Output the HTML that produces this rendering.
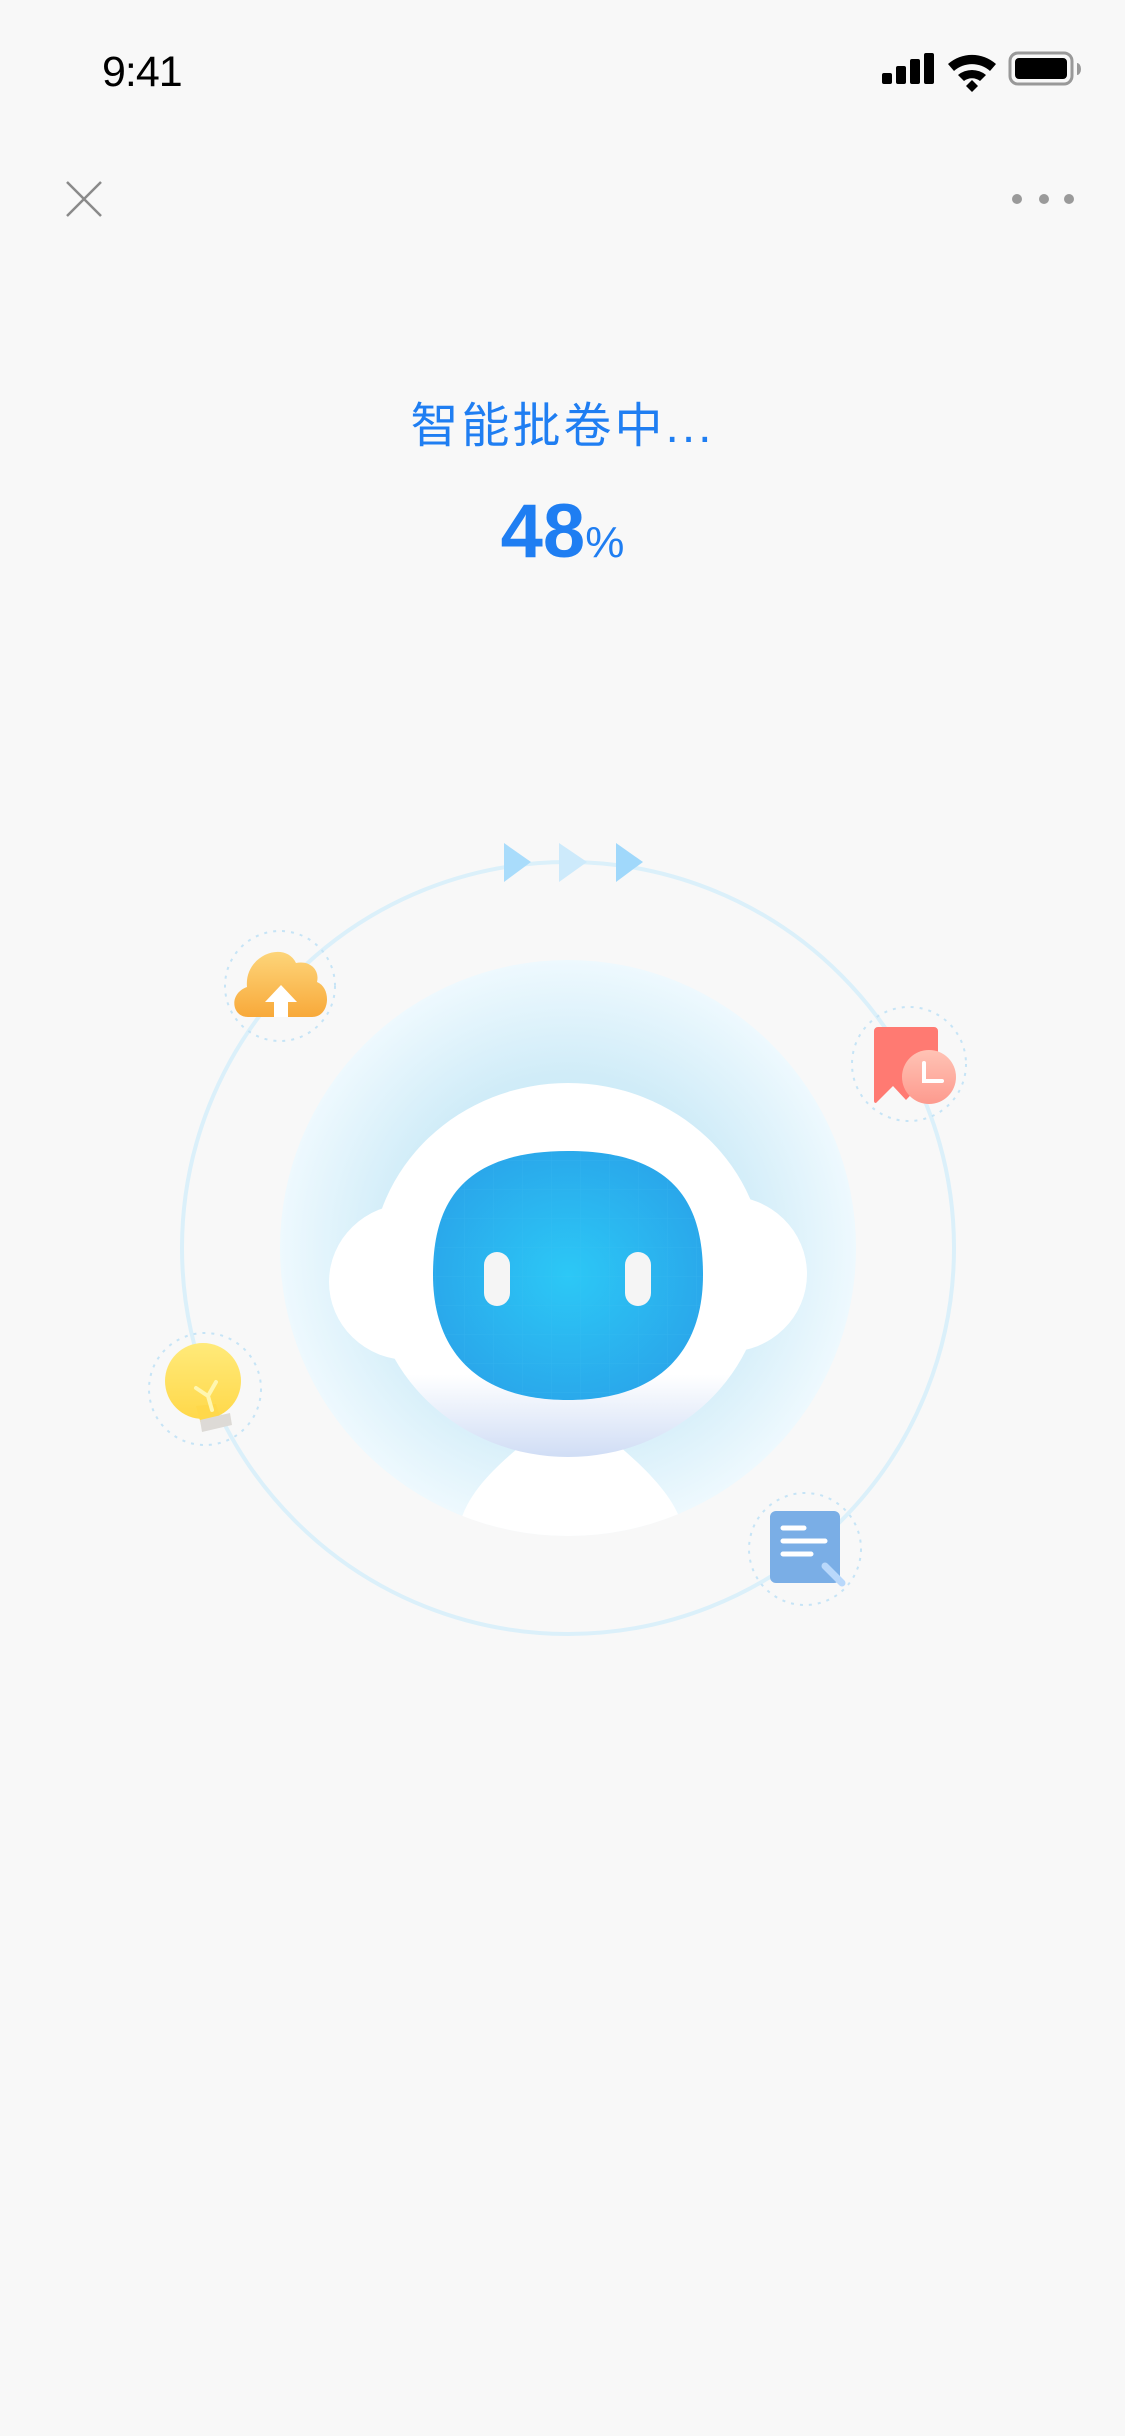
<!DOCTYPE html>
<html><head><meta charset="utf-8"><style>
html,body{margin:0;padding:0;background:#f8f8f8;}
body{width:1125px;height:2436px;position:relative;overflow:hidden;font-family:"Liberation Sans","Noto Sans CJK SC",sans-serif;}
.t{position:absolute;left:0;width:1125px;text-align:center;color:#1f7ef2;}
</style></head><body>
<div style="position:absolute;left:102px;top:48px;font-size:43px;color:#000;letter-spacing:-1px;">9:41</div>
<div class="t" style="top:386px;font-size:48px;letter-spacing:3px;">智能批卷中...</div>
<div class="t" style="top:488px;"><span style="font-size:76px;font-weight:bold;">48</span><span style="font-size:44px;">%</span></div>
<svg width="1125" height="2436" style="position:absolute;left:0;top:0" xmlns="http://www.w3.org/2000/svg">
<defs>
<radialGradient id="glow" cx="0.5" cy="0.5" r="0.5">
<stop offset="0" stop-color="#b7e1f4"/><stop offset="0.6" stop-color="#d0ecf8"/><stop offset="1" stop-color="#eef9fe"/>
</radialGradient>
<radialGradient id="face" cx="0.5" cy="0.5" r="0.55">
<stop offset="0" stop-color="#2cc8f6"/><stop offset="1" stop-color="#2aa6ea"/>
</radialGradient>
<linearGradient id="head" x1="0" y1="0" x2="0" y2="1">
<stop offset="0.78" stop-color="#ffffff"/><stop offset="1" stop-color="#d0ddf5"/>
</linearGradient>
<linearGradient id="cloud" x1="0" y1="0" x2="0" y2="1"><stop offset="0" stop-color="#fdd57a"/><stop offset="1" stop-color="#f8a93a"/></linearGradient>
<linearGradient id="bulb" x1="0" y1="0" x2="0" y2="1"><stop offset="0" stop-color="#ffea7a"/><stop offset="1" stop-color="#ffd84a"/></linearGradient>
<linearGradient id="clk" x1="0" y1="0" x2="0" y2="1"><stop offset="0" stop-color="#ffc3b5"/><stop offset="1" stop-color="#fd9a8e"/></linearGradient>
<clipPath id="gc"><circle cx="568" cy="1248" r="288"/></clipPath>
<clipPath id="fc"><path d="M568 1151 C680 1151 703 1210 703 1275 C703 1350 660 1400 568 1400 C476 1400 433 1350 433 1275 C433 1210 456 1151 568 1151Z"/></clipPath>
<pattern id="grid" width="29" height="29" patternUnits="userSpaceOnUse"><path d="M0 0H29M0 0V29" stroke="#4cc6f4" stroke-width="1" opacity="0.35" fill="none"/></pattern>
</defs>
<rect x="882" y="73" width="10" height="11" rx="2"/>
<rect x="896" y="66" width="10" height="18" rx="2"/>
<rect x="910" y="59" width="10" height="25" rx="2"/>
<rect x="924" y="53" width="10" height="31" rx="2"/>
<path d="M948 64 A36 36 0 0 1 996 64 L990 71 A27 27 0 0 0 954 71Z" fill="#000"/>
<path d="M958 75 A22 22 0 0 1 986 75 L980 81 A13 13 0 0 0 964 81Z" fill="#000"/>
<path d="M966 86 L972 80 L978 86 L972 92Z" fill="#000"/>
<rect x="1010" y="53" width="62" height="31" rx="8" fill="none" stroke="#999" stroke-width="3"/>
<rect x="1015" y="58" width="52" height="21" rx="4" fill="#000"/>
<path d="M1077 63 a4 6 0 0 1 0 12z" fill="#999"/>
<path d="M67 182 L101 216 M101 182 L67 216" stroke="#8a8a8a" stroke-width="2.5"/>
<circle cx="1017" cy="199" r="5" fill="#9a9a9a"/><circle cx="1044" cy="199" r="5" fill="#9a9a9a"/><circle cx="1069" cy="199" r="5" fill="#9a9a9a"/>
<circle cx="568" cy="1248" r="386" fill="none" stroke="#dbf0fa" stroke-width="4"/>
<path d="M504 843 L531 862 L504 882Z" fill="#a9dcfb"/>
<path d="M559 843 L587 862 L559 882Z" fill="#cdeafb"/>
<path d="M616 843 L643 862 L616 882Z" fill="#a0d8fb"/>
<circle cx="568" cy="1248" r="288" fill="url(#glow)"/>
<g clip-path="url(#gc)">
<path d="M458 1535 C462 1490 510 1455 540 1430 L600 1430 C630 1455 680 1495 684 1535 L684 1560 L458 1560Z" fill="#fff"/>
</g>
<ellipse cx="409" cy="1282" rx="80" ry="78" fill="#fff"/>
<ellipse cx="727" cy="1274" rx="80" ry="78" fill="#fff"/>
<ellipse cx="568" cy="1270" rx="197" ry="187" fill="url(#head)"/>
<g clip-path="url(#fc)">
<rect x="433" y="1151" width="270" height="249" fill="url(#face)"/>
<rect x="433" y="1151" width="270" height="249" fill="url(#grid)" opacity="0.6"/>
</g>
<rect x="484" y="1252" width="26" height="54" rx="13" fill="#f5f5f5"/>
<rect x="625" y="1252" width="26" height="54" rx="13" fill="#f5f5f5"/>
<g fill="none" stroke="#c6e4f6" stroke-width="2" stroke-dasharray="3 6">
<circle cx="280" cy="986" r="55"/><circle cx="909" cy="1064" r="57"/><circle cx="205" cy="1389" r="56"/><circle cx="805" cy="1549" r="56"/>
</g>
<path d="M248 1017 C232 1017 228 994 247 987 C244 955 285 940 296 963 C310 960 320 970 317 982 C332 988 330 1017 312 1017Z" fill="url(#cloud)"/>
<path d="M274 1017 L274 1002 L265 1002 L281 985 L297 1002 L288 1002 L288 1017Z" fill="#fff"/>
<path d="M878 1027 H934 a4 4 0 0 1 4 4 V1100 L920 1085 L906 1100 L893 1086 L876 1103 a2 2 0 0 1 -2 -2 V1031 a4 4 0 0 1 4 -4Z" fill="#ff7a72"/>
<circle cx="929" cy="1077" r="27" fill="url(#clk)"/>
<path d="M924 1063 V1081 H942" fill="none" stroke="#fff" stroke-width="4" stroke-linecap="round"/>
<circle cx="203" cy="1381" r="38" fill="url(#bulb)"/>
<path d="M196 1406 L202 1428 L222 1423 L216 1404Z" fill="#ffd84a"/>
<path d="M196 1388 L208 1396 L216 1382 M208 1396 L212 1410" fill="none" stroke="#fff6b0" stroke-width="4" stroke-linecap="round"/>
<path d="M200 1420 L230 1413 L232 1425 L202 1432Z" fill="#dddad6"/>
<rect x="770" y="1511" width="70" height="72" rx="6" fill="#7aaee6"/>
<path d="M783 1528 H804 M783 1541 H825 M783 1554 H811" stroke="#fff" stroke-width="5" stroke-linecap="round"/>
<path d="M825 1566 L842 1583" stroke="#b9d8fb" stroke-width="7" stroke-linecap="round"/>
</svg>
</body></html>
